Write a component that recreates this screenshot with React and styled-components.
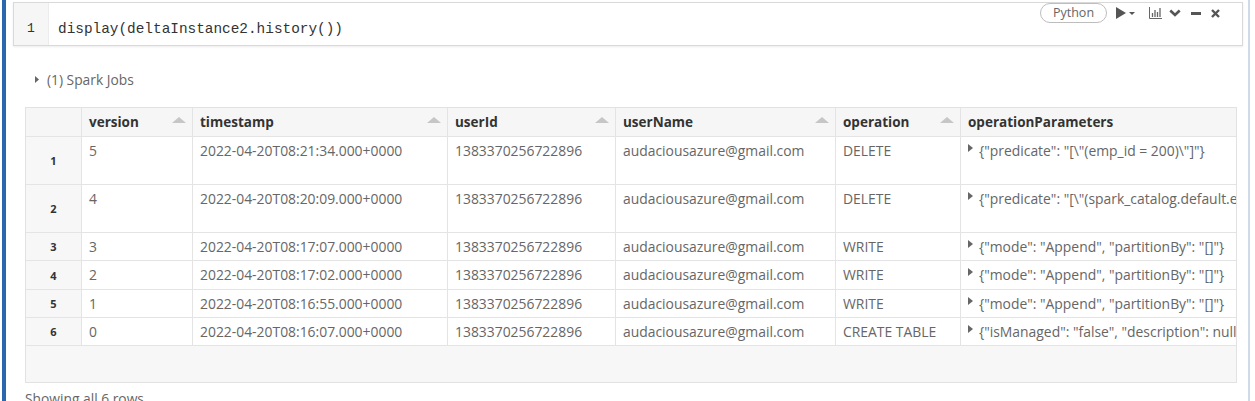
import React from 'react';
import styled, { createGlobalStyle } from 'styled-components';

const GlobalStyle = createGlobalStyle`
  body {
    margin: 0;
    background: #fff;
    font-family: "Open Sans", "Noto Sans", sans-serif;
  }
`;

const Frame = styled.div`
  box-sizing: border-box;
  width: 1248px;
  height: 401px;
  margin-left: 2px;
  padding: 2px 5px 0 7px;
  border-left: 4px solid #2a68ad;
  border-right: 2px solid #cfdbe7;
  overflow: hidden;
`;

const CodeCell = styled.div`
  box-sizing: border-box;
  height: 44px;
  display: flex;
  border: 1px solid #d9d9d9;
  box-shadow: 0 1px 2px rgba(0, 0, 0, 0.08);
  background: #fff;
`;

const Gutter = styled.div`
  width: 34px;
  background: #f6f6f6;
  border-right: 1px solid #ececec;
  padding-top: 17px;
  text-align: center;
  font-family: "Liberation Mono", monospace;
  font-size: 13px;
  line-height: 18px;
  color: #333;
`;

const Code = styled.div`
  padding: 17px 0 0 9px;
  font-family: "Liberation Mono", "DejaVu Sans Mono", monospace;
  font-size: 14.4px;
  line-height: 18px;
  color: #333;
  white-space: pre;
`;

const Toolbar = styled.div`
  margin-left: auto;
  padding-right: 22px;
  height: 20px;
  display: flex;
  align-items: center;
  color: #555;
`;

const LangPill = styled.div`
  box-sizing: border-box;
  width: 67px;
  height: 20px;
  border: 1px solid #bdbdbd;
  border-radius: 10px;
  font-size: 12.5px;
  line-height: 18px;
  text-align: center;
  color: #666;
`;

const Icon = styled.svg`
  display: block;
  flex-shrink: 0;
  margin-left: ${p => p.$ml || 0}px;
  margin-top: ${p => p.$mt || 0}px;
`;

const Output = styled.div`
  margin: 0 6px 0 12px;
`;

const SparkJobs = styled.div`
  margin-top: 23px;
  height: 20px;
  padding-left: 10px;
  display: flex;
  align-items: center;
  gap: 8px;
  font-size: 13.8px;
  color: #666;
`;

const TableWrap = styled.div`
  box-sizing: border-box;
  margin-top: 18px;
  height: 276px;
  border: 1px solid #e2e2e2;
  background: #f7f7f7;
  overflow: hidden;
`;

const Table = styled.table`
  border-collapse: separate;
  border-spacing: 0;
  table-layout: fixed;
  width: 1260px;
`;

const HeadCell = styled.th`
  box-sizing: border-box;
  width: ${p => p.$w}px;
  height: 29px;
  padding: 0 6px 0 7px;
  background: #f6f6f6;
  border-right: 1px solid #e4e4e4;
  border-bottom: 1px solid #e4e4e4;
  text-align: left;
  font-size: 13.5px;
  font-weight: 700;
  color: #333;
`;

const HeadInner = styled.div`
  display: flex;
  align-items: center;
  justify-content: space-between;
`;

const SortArrow = styled.span`
  width: 0;
  height: 0;
  margin-top: -5px;
  border-left: 7px solid transparent;
  border-right: 7px solid transparent;
  border-bottom: 6px solid #c6c6c6;
`;

const Row = styled.tr`
  height: ${p => p.$h}px;
`;

const IndexCell = styled.td`
  box-sizing: border-box;
  background: #f7f7f7;
  border-right: 1px solid #e4e4e4;
  border-bottom: 1px solid #e4e4e4;
  text-align: center;
  vertical-align: middle;
  font-size: 11px;
  font-weight: 700;
  color: #333;
`;

const Cell = styled.td`
  box-sizing: border-box;
  padding: 5px 7px 0 7px;
  background: #fff;
  border-right: 1px solid #e4e4e4;
  border-bottom: 1px solid #e4e4e4;
  vertical-align: top;
  font-size: 13.9px;
  line-height: 18px;
  color: #666;
  white-space: nowrap;
  overflow: hidden;
`;

const ParamValue = styled.div`
  display: flex;
  align-items: flex-start;
  gap: 6px;
`;

const Footer = styled.div`
  margin-top: 7px;
  font-size: 13.8px;
  line-height: 18px;
  color: #666;
`;

const columns = [
  { key: 'version', w: 111 },
  { key: 'timestamp', w: 255 },
  { key: 'userId', w: 168 },
  { key: 'userName', w: 220 },
  { key: 'operation', w: 125 },
  { key: 'operationParameters', w: 325 },
];

const rows = [
  { v: '5', ts: '2022-04-20T08:21:34.000+0000', op: 'DELETE', params: '{"predicate": "[\\"(emp_id = 200)\\"]"}', h: 48 },
  { v: '4', ts: '2022-04-20T08:20:09.000+0000', op: 'DELETE', params: '{"predicate": "[\\"(spark_catalog.default.employee.emp_id = 100)\\"]"}', h: 48 },
  { v: '3', ts: '2022-04-20T08:17:07.000+0000', op: 'WRITE', params: '{"mode": "Append", "partitionBy": "[]"}', h: 28 },
  { v: '2', ts: '2022-04-20T08:17:02.000+0000', op: 'WRITE', params: '{"mode": "Append", "partitionBy": "[]"}', h: 29 },
  { v: '1', ts: '2022-04-20T08:16:55.000+0000', op: 'WRITE', params: '{"mode": "Append", "partitionBy": "[]"}', h: 28 },
  { v: '0', ts: '2022-04-20T08:16:07.000+0000', op: 'CREATE TABLE', params: '{"isManaged": "false", "description": null, "partitionBy": "[]"}', h: 28 },
];

const Caret = ({ color = '#666' }) => (
  <Icon width="5" height="8" viewBox="0 0 5 8" $mt={2}>
    <path d="M0 0 L5 4 L0 8 Z" fill={color} />
  </Icon>
);

const App = () => (
  <>
    <GlobalStyle />
    <Frame>
      <CodeCell>
        <Gutter>1</Gutter>
        <Code>display(deltaInstance2.history())</Code>
        <Toolbar>
          <LangPill>Python</LangPill>
          <Icon width="10" height="12" viewBox="0 0 10 12" $ml={9}>
            <path d="M0 0 L10 6 L0 12 Z" fill="#555" />
          </Icon>
          <Icon width="6" height="3" viewBox="0 0 6 3" $ml={3}>
            <path d="M0 0 L6 0 L3 3 Z" fill="#555" />
          </Icon>
          <Icon width="13" height="12" viewBox="0 0 13 12" $ml={14}>
            <g stroke="#666" strokeWidth="1" fill="none">
              <path d="M0.5 0 V11.5 H13" />
              <path d="M3.5 6 V10 M6 3 V10 M8.5 5 V10 M11 1 V10" strokeWidth="1.3" />
            </g>
          </Icon>
          <Icon width="12" height="8" viewBox="0 0 12 8" $ml={7}>
            <path d="M1.3 1.5 L6 6 L10.7 1.5" stroke="#555" strokeWidth="2.6" fill="none" />
          </Icon>
          <Icon width="10" height="3" viewBox="0 0 10 3" $ml={10}>
            <rect width="10" height="3" fill="#555" />
          </Icon>
          <Icon width="9" height="9" viewBox="0 0 9 9" $ml={10}>
            <path d="M1 1 L8 8 M8 1 L1 8" stroke="#555" strokeWidth="2.4" />
          </Icon>
        </Toolbar>
      </CodeCell>

      <Output>
        <SparkJobs>
          <Icon width="4" height="7" viewBox="0 0 4 7">
            <path d="M0 0 L4 3.5 L0 7 Z" fill="#666" />
          </Icon>
          (1) Spark Jobs
        </SparkJobs>

        <TableWrap>
          <Table>
            <thead>
              <tr>
                <HeadCell $w={56} />
                {columns.map(c => (
                  <HeadCell key={c.key} $w={c.w}>
                    <HeadInner>
                      {c.key}
                      <SortArrow />
                    </HeadInner>
                  </HeadCell>
                ))}
              </tr>
            </thead>
            <tbody>
              {rows.map((r, i) => (
                <Row key={r.ts} $h={r.h}>
                  <IndexCell>{i + 1}</IndexCell>
                  <Cell>{r.v}</Cell>
                  <Cell>{r.ts}</Cell>
                  <Cell>1383370256722896</Cell>
                  <Cell>audaciousazure@gmail.com</Cell>
                  <Cell>{r.op}</Cell>
                  <Cell>
                    <ParamValue>
                      <Caret />
                      {r.params}
                    </ParamValue>
                  </Cell>
                </Row>
              ))}
            </tbody>
          </Table>
        </TableWrap>

        <Footer>Showing all 6 rows.</Footer>
      </Output>
    </Frame>
  </>
);

export default App;
